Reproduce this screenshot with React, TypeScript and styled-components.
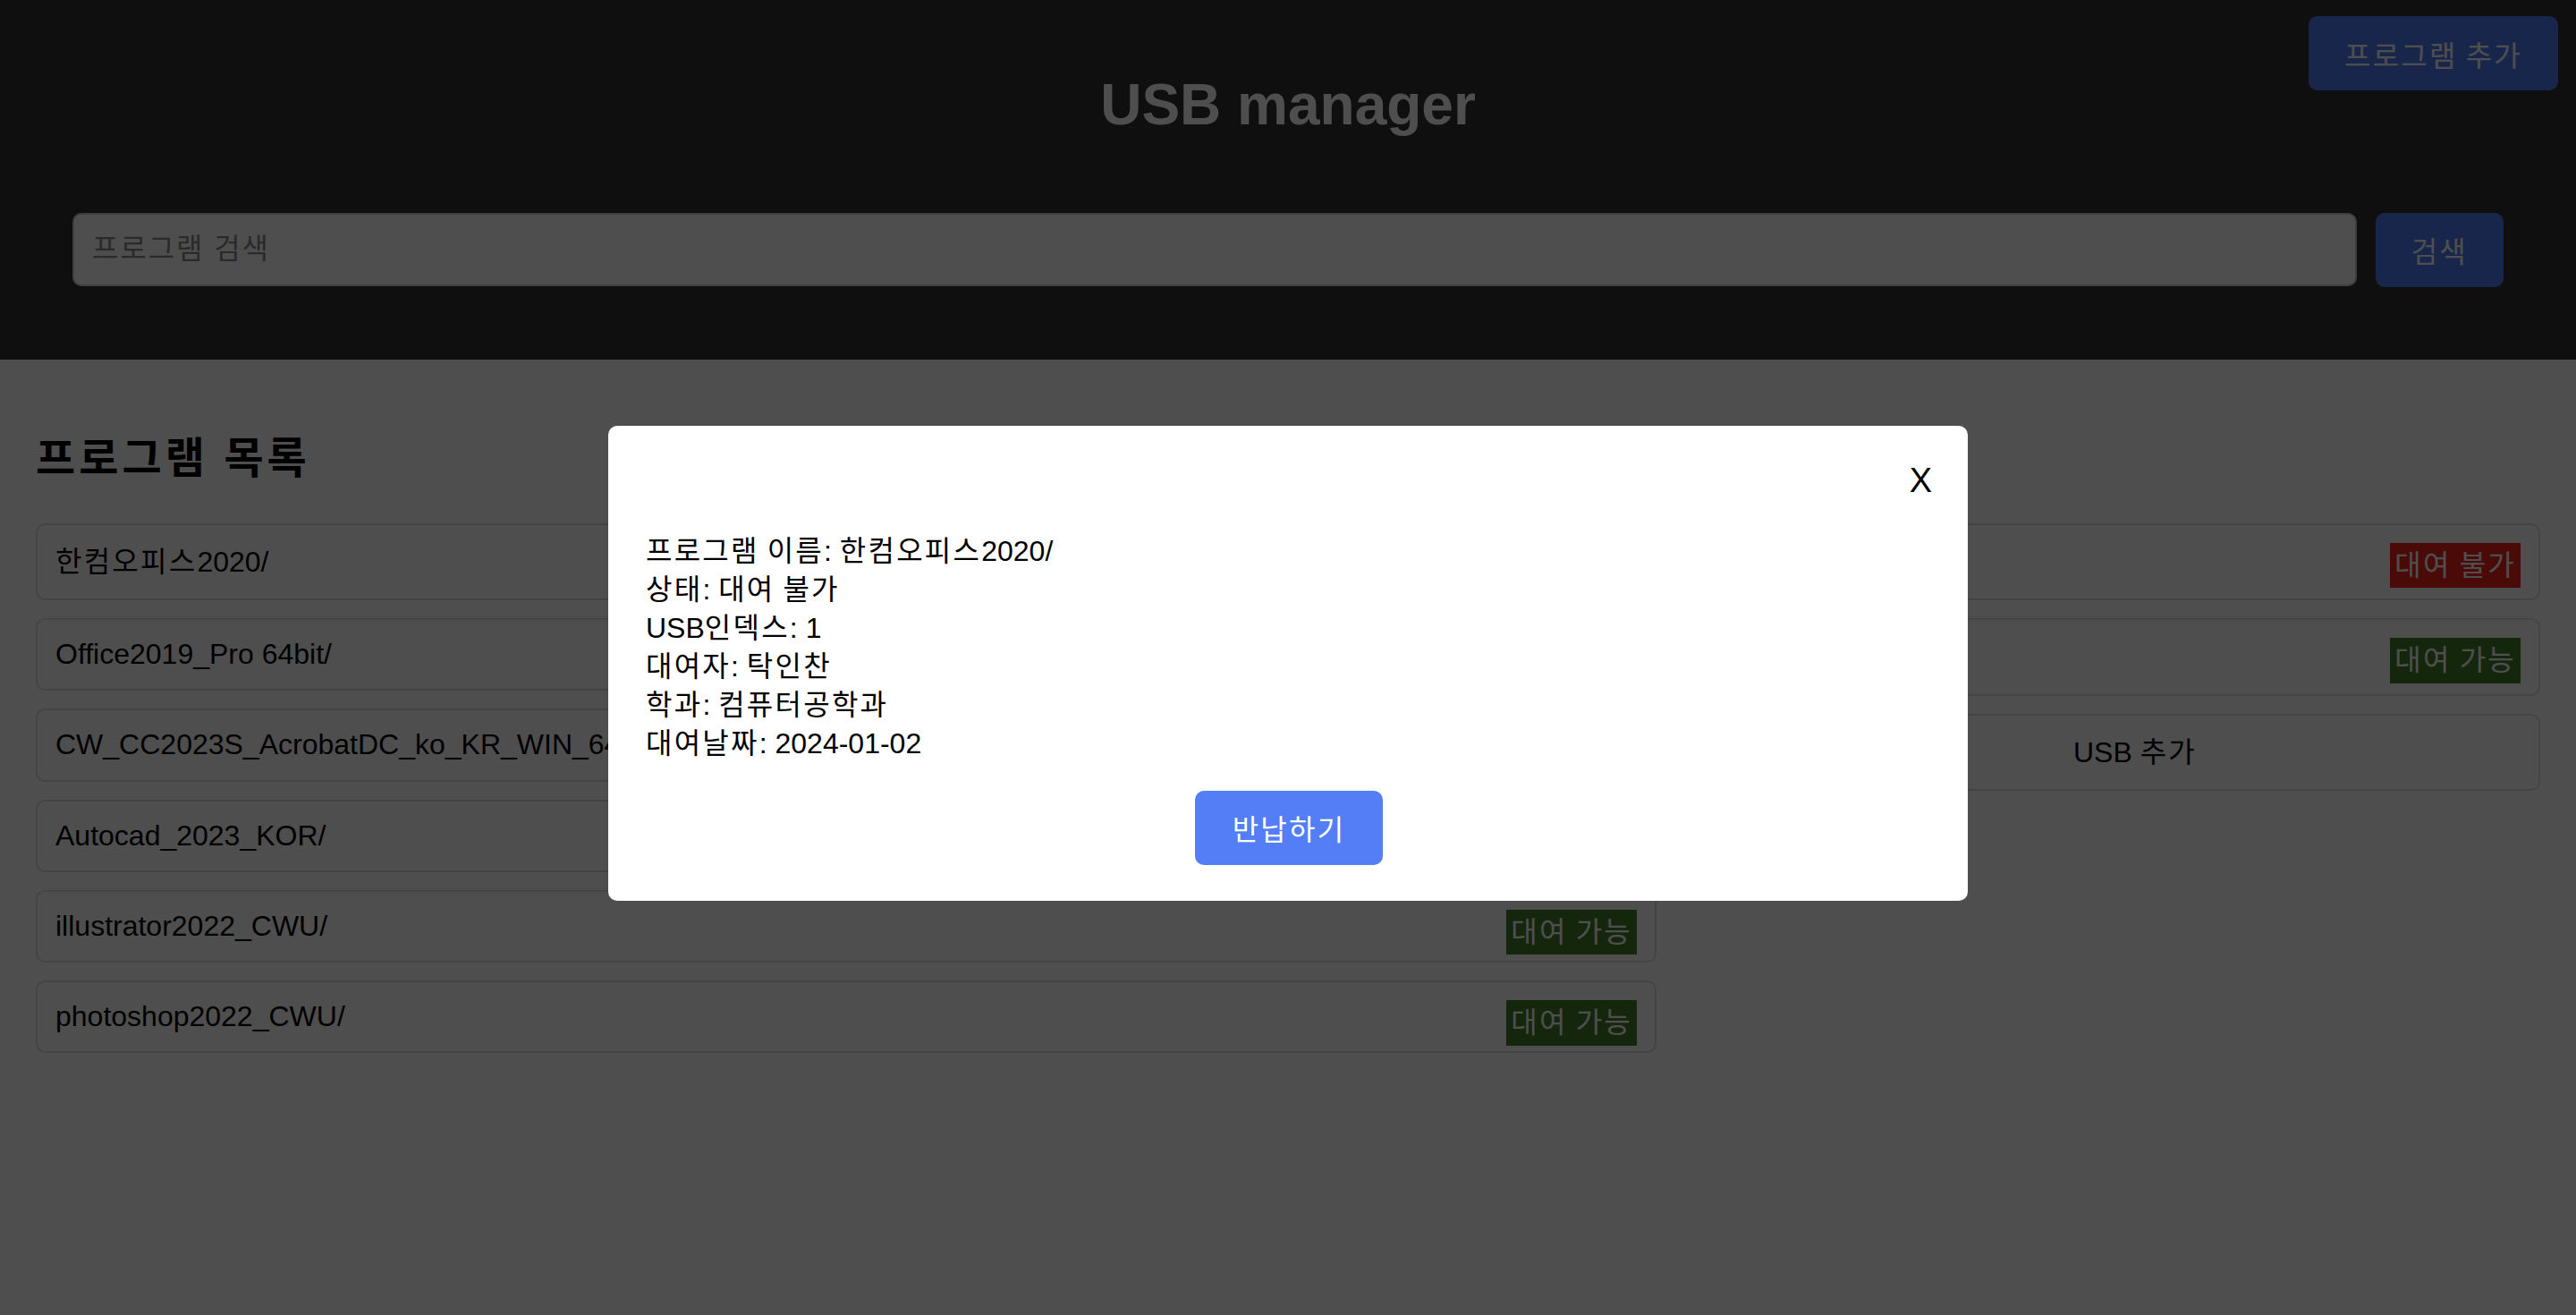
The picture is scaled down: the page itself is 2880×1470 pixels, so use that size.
import React from "react";
import styled, { createGlobalStyle } from "styled-components";

const GlobalStyle = createGlobalStyle`
  * { box-sizing: border-box; }
  html, body { margin: 0; padding: 0; background: #ffffff; }
  body {
    font-family: "Liberation Sans", "Noto Sans CJK KR", sans-serif;
    font-size: 32px;
    color: #000;
  }
`;

const BLUE = "#537ef5";

const Ko = styled.span`
  letter-spacing: 0.07em;
`;

const hasHangul = (s: string) => /[\uac00-\ud7a3]/.test(s);

const T = ({ children }: { children: string }) => (
  <>
    {children.split(/([\uac00-\ud7a3]+)/).map((part, i) =>
      hasHangul(part) ? <Ko key={i}>{part}</Ko> : part
    )}
  </>
);

const Header = styled.header`
  position: relative;
  background: #333333;
  padding: 81px 81px 81px;
`;

const Title = styled.h1`
  margin: 0;
  color: #ffffff;
  font-size: 64px;
  line-height: 73.5px;
  font-weight: 700;
  text-align: center;
`;

const AddProgramButton = styled.button`
  position: absolute;
  top: 18px;
  right: 20px;
  height: 83px;
  padding: 0 40px;
  border: none;
  border-radius: 10px;
  background: ${BLUE};
  color: #ffffff;
  font-family: inherit;
  font-size: 32px;
`;

const SearchForm = styled.form`
  display: flex;
  gap: 21px;
  margin-top: 83px;
`;

const SearchInput = styled.input`
  flex: 1;
  height: 82px;
  padding: 0 20px;
  border: 2px solid #cccccc;
  border-radius: 10px;
  background: #ffffff;
  font-family: inherit;
  font-size: 32px;
  &::placeholder {
    color: #8a8a8a;
    letter-spacing: 0.06em;
  }
`;

const SearchButton = styled.button`
  height: 83px;
  padding: 0 40px;
  border: none;
  border-radius: 10px;
  background: ${BLUE};
  color: #ffffff;
  font-family: inherit;
  font-size: 32px;
`;

const Main = styled.main`
  display: grid;
  grid-template-columns: 2fr 1fr;
  column-gap: 82px;
  padding: 79px 40px 40px;
`;

const Heading = styled.h2`
  grid-column: 1;
  grid-row: 1;
  margin: 0 0 40px;
  font-size: 48px;
  line-height: 64px;
  font-weight: 700;
  letter-spacing: 0.085em;
`;

const List = styled.div<{ $col: number }>`
  grid-column: ${(p) => p.$col};
  grid-row: 2;
`;

const Row = styled.div<{ $hangul: boolean; $center?: boolean }>`
  border: 2px solid #dddddd;
  border-radius: 10px;
  padding: 20px;
  line-height: ${(p) => (p.$hangul ? "42.6px" : "37.2px")};
  text-align: ${(p) => (p.$center ? "center" : "left")};
  white-space: nowrap;
  & + & { margin-top: 20px; }
`;

const Badge = styled.span<{ $ok: boolean }>`
  float: right;
  padding: 4px 5px;
  line-height: 42.6px;
  color: #ffffff;
  background: ${(p) => (p.$ok ? "rgb(66, 124, 36)" : "rgb(240, 38, 26)")};
`;

const Overlay = styled.div`
  position: fixed;
  inset: 0;
  display: flex;
  align-items: center;
  justify-content: center;
  padding-top: 12px;
  background: rgba(0, 0, 0, 0.694);
`;

const Modal = styled.div`
  width: 1520px;
  padding: 40px 40px 40px 42px;
  border-radius: 10px;
  background: #ffffff;
`;

const CloseRow = styled.div`
  display: flex;
  justify-content: flex-end;
`;

const CloseButton = styled.button`
  padding: 0;
  border: none;
  background: none;
  font-family: "Liberation Sans", sans-serif;
  font-size: 38px;
  line-height: 43px;
  color: #000;
`;

const Info = styled.div`
  margin: 36px 0 31px;
  line-height: 43px;
`;

const Footer = styled.div`
  display: flex;
  justify-content: center;
`;

const ReturnButton = styled.button`
  height: 83px;
  padding: 0 42px;
  border: none;
  border-radius: 10px;
  background: ${BLUE};
  color: #ffffff;
  font-family: inherit;
  font-size: 32px;
`;

const programs = [
  { name: "한컴오피스2020/", ok: false },
  { name: "Office2019_Pro 64bit/", ok: true },
  { name: "CW_CC2023S_AcrobatDC_ko_KR_WIN_64bit/", ok: true },
  { name: "Autocad_2023_KOR/", ok: true },
  { name: "illustrator2022_CWU/", ok: true },
  { name: "photoshop2022_CWU/", ok: true },
];

const usbs = [
  { name: "USB 1번", ok: false },
  { name: "USB 2번", ok: true },
];

const details = [
  "프로그램 이름: 한컴오피스2020/",
  "상태: 대여 불가",
  "USB인덱스: 1",
  "대여자: 탁인찬",
  "학과: 컴퓨터공학과",
  "대여날짜: 2024-01-02",
];

export default function App() {
  return (
    <>
      <GlobalStyle />
      <Header>
        <Title>USB manager</Title>
        <AddProgramButton type="button">
          <T>프로그램 추가</T>
        </AddProgramButton>
        <SearchForm onSubmit={(e) => e.preventDefault()}>
          <SearchInput placeholder="프로그램 검색" />
          <SearchButton type="submit">
            <T>검색</T>
          </SearchButton>
        </SearchForm>
      </Header>
      <Main>
        <Heading>프로그램 목록</Heading>
        <List $col={1}>
          {programs.map((p) => (
            <Row key={p.name} $hangul={hasHangul(p.name)}>
              <Badge $ok={p.ok}>
                <T>{p.ok ? "대여 가능" : "대여 불가"}</T>
              </Badge>
              <T>{p.name}</T>
            </Row>
          ))}
        </List>
        <List $col={2}>
          {usbs.map((u) => (
            <Row key={u.name} $hangul={hasHangul(u.name)}>
              <Badge $ok={u.ok}>
                <T>{u.ok ? "대여 가능" : "대여 불가"}</T>
              </Badge>
              <T>{u.name}</T>
            </Row>
          ))}
          <Row $hangul $center>
            <T>USB 추가</T>
          </Row>
        </List>
      </Main>
      <Overlay>
        <Modal>
          <CloseRow>
            <CloseButton type="button">X</CloseButton>
          </CloseRow>
          <Info>
            {details.map((d) => (
              <div key={d}>
                <T>{d}</T>
              </div>
            ))}
          </Info>
          <Footer>
            <ReturnButton type="button">
              <T>반납하기</T>
            </ReturnButton>
          </Footer>
        </Modal>
      </Overlay>
    </>
  );
}
